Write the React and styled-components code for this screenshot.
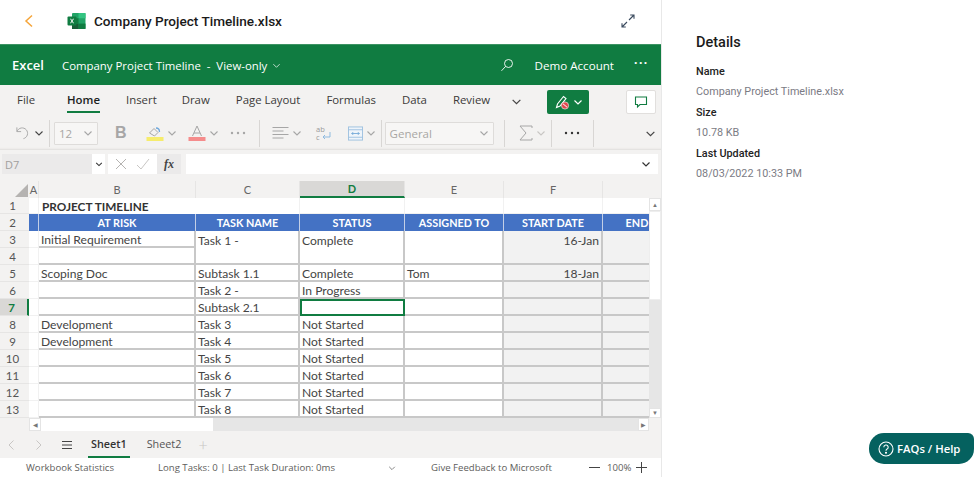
import React from 'react';
import styled, { createGlobalStyle } from 'styled-components';

const Global = createGlobalStyle`
  html, body { margin: 0; padding: 0; background: #fff; }
  * { box-sizing: border-box; }
  #root { width: 977px; height: 477px; overflow: hidden; }
`;
const Page = styled.div`display: flex; width: 977px; height: 477px; font-family: "Open Sans", sans-serif; overflow: hidden;`;
const Main = styled.div`width: 662px; height: 477px; display: flex; flex-direction: column; border-right: 1px solid #e8e8e8; flex: none;`;
const TopBar = styled.div`height: 44px; flex: none; display: flex; align-items: center; padding: 0 26px 3px 24px; color: #111;`;
const Back = styled.div`width: 43px; display: flex;`;
const FileName = styled.div`font: 500 13.600px Roboto, sans-serif; margin-left: 8px; color: #1a1a1a; flex: 1;`;
const GreenBar = styled.div`height: 41px; flex: none; background: #107c41; color: #fff; display: flex; align-items: center; font-size: 12px; padding-left: 12px; border-top: 1px solid #3d9363;`;
const Brand = styled.div`font-weight: 600; font-size: 13px; width: 50px;`;
const DocTitle = styled.div`font-size: 11.400px; flex: 1; display: flex; align-items: center; gap: 2px; white-space: pre;`;
const Account = styled.div`font-size: 11.600px; margin: 0 20px 0 21px; white-space: nowrap;`;
const GreenDots = styled.div`width: 27px; display: flex; font-size: 12px; letter-spacing: 1.500px; font-weight: 700; margin-top: -6px;`;
const Tabs = styled.div`height: 33px; flex: none; background: #f3f2f1; display: flex; align-items: center; padding-left: 17px; font-size: 11.400px; color: #3b3a39; white-space: nowrap;`;
const Tab = styled.div`
  margin-right: ${p => p.$gap}px; height: 33px; line-height: 29px; position: relative;
  ${p => p.$active && `font-weight: 600; color: #201f1e; &::after { content: ""; position: absolute; left: 0; right: 0; bottom: 5px; height: 2px; background: #107c41; }`}
`;
const EditBtn = styled.div`width: 42px; height: 24px; background: #107c41; border-radius: 2px; margin-left: 25px; display: flex; align-items: center; justify-content: center; gap: 3px;`;
const CommentBtn = styled.div`width: 30px; height: 24px; background: #fff; border: 1px solid #e1dfdd; border-radius: 2px; margin-left: 37px; display: flex; align-items: center; justify-content: center;`;
const Ribbon = styled.div`height: 32px; flex: none; background: #f3f2f1; display: flex; align-items: center; padding: 0 0 2px 15px; box-shadow: inset 0 -3px 2px -2px #dfdddb; color: #a19f9d; font-size: 12px;`;
const Sep = styled.div`width: 1px; height: 27px; flex: none; background: #d8d6d4; margin: ${p => p.$m || '0 4px'};`;
const FakeSelect = styled.div`width: ${p => p.$w}px; height: 23px; flex: none; border: 1px solid #dedcda; background: #f7f6f5; display: flex; align-items: center; justify-content: space-between; padding: 0 4px; font-size: 11.500px; color: #a8a6a4; border-radius: 1px;`;
const Tool = styled.div`display: flex; align-items: center; gap: ${p => p.$gap ?? 3}px; margin-left: ${p => p.$ml || 0}px; flex: none;`;
const Bold = styled.div`font-weight: 700; font-size: 16px; color: #a6a6a6; font-family: "Liberation Sans", sans-serif;`;
const FormulaBar = styled.div`height: 28px; flex: none; background: #f3f2f1; display: flex; align-items: center; padding: 0 3px 0 2px; gap: 3px;`;
const NameBox = styled.div`width: 103px; height: 20px; background: #ebeaea; display: flex; align-items: center; justify-content: space-between; font-size: 11px; color: #a19f9d; padding-left: 3px;`;
const NameDrop = styled.div`width: 13px; height: 20px; background: #fff; display: flex; align-items: center; justify-content: center;`;
const Confirm = styled.div`width: 49px; height: 20px; background: #fff; display: flex; align-items: center; justify-content: space-around; padding: 0 2px;`;
const Fx = styled.div`width: 24px; height: 20px; background: #ebeaea; font: italic 700 12px "Liberation Serif", serif; color: #444; display: flex; align-items: center; justify-content: center; margin-left: -3px;`;
const FormulaInput = styled.div`flex: 1; height: 20px; background: #fff; display: flex; align-items: center; justify-content: flex-end; padding-right: 7px; margin-left: 2px;`;
const SheetArea = styled.div`height: 240px; flex: none; display: flex; padding-top: 3px; background: linear-gradient(#f3f2f1 20px, #fff 20px);`;
const Grid = styled.div`
  width: 649px; height: 237px; overflow: hidden; display: grid;
  grid-template-columns: 29px 10px 157px 104px 105px 99px 99px 99px;
  grid-template-rows: 17px 16px repeat(13, 17px);
  font-family: Lato, "Open Sans", sans-serif; font-size: 12.100px; color: #444;
`;
const ColHead = styled.div`
  display: flex; align-items: center; justify-content: center; font-size: 11px; color: #666; background: #f3f2f1;
  border-right: 1px solid #e6e5e4;
  ${p => p.$on && `background: #d9d8d6; color: #107c41; font-weight: 700; border-bottom: 2px solid #107c41;`}
`;
const Corner = styled.div`background: #f3f2f1; display: flex; justify-content: flex-end; align-items: flex-end; padding: 0 1px 1px 0;`;
const RowHead = styled.div`
  display: flex; align-items: center; justify-content: center; font-size: 11.500px; color: #555; background: #f3f2f1; padding-right: 4px;
  border-bottom: 1px solid #e6e5e4;
  ${p => p.$on && `background: #d9d8d6; color: #107c41; font-weight: 700; border-right: 2px solid #107c41;`}
`;
const Cell = styled.div`
  grid-row: span ${p => p.$span || 1};
  display: flex; align-items: ${p => p.$span ? 'flex-start' : 'center'}; padding: ${p => p.$span ? '2px 2px 0' : '2px 2px 0'}; white-space: nowrap;
  min-width: 0; overflow: hidden;
  justify-content: ${p => p.$right ? 'flex-end' : 'flex-start'};
  background: ${p => p.$grey ? '#f2f2f2' : '#fff'};
  border-right: ${p => p.$plain ? '1px solid #f1f1f1' : '2px solid #c8c8c8'};
  border-bottom: ${p => p.$plain ? '1px solid #f1f1f1' : '2px solid #c8c8c8'};
  ${p => p.$active && `outline: 2px solid #107c41; outline-offset: -2px;`}
`;
const TitleCell = styled.div`grid-column: span 2; display: flex; align-items: center; padding-left: 3px; font-weight: 700; font-size: 11.800px; color: #333; white-space: nowrap; border-right: 1px solid #f1f1f1;`;
const HeadCell = styled.div`display: flex; align-items: center; justify-content: center; background: #4472c4; color: #fff; font-weight: 700; font-size: 10.800px; white-space: nowrap; border-right: 1px solid #c3cfe6; overflow: hidden;`;
const VScroll = styled.div`width: 12px; flex: none; margin-top: 17px; display: flex; flex-direction: column; height: 220px;`;
const ScrollBtn = styled.div`height: ${p => p.$h || 13}px; width: ${p => p.$w || 12}px; flex: none; background: #fff; border: 1px solid #e4e4e4; display: flex; align-items: center; justify-content: center; color: #777; font-size: 6px; line-height: 1;`;
const VThumb = styled.div`height: 89px; flex: none; background: #fff; border: 1px solid #eee;`;
const Track = styled.div`flex: 1; background: #e6e6e6;`;
const HScroll = styled.div`height: 13px; flex: none; background: #f3f2f1; display: flex; padding-left: 29px; padding-right: 12px;`;
const HThumb = styled.div`width: 172px; background: #fff; flex: none;`;
const SheetBar = styled.div`height: 27px; flex: none; background: #f3f2f1; display: flex; align-items: center; padding-left: 7px; font-size: 10.800px; color: #555;`;
const SheetTab = styled.div`
  height: 27px; line-height: 25px; padding: 0 3px; position: relative; margin-right: ${p => p.$mr}px;
  ${p => p.$active && `font-weight: 600; color: #333; &::after { content: ""; position: absolute; left: 0; right: 0; bottom: 0; height: 2px; background: #107c41; }`}
`;
const Icons = styled.div`display: flex; align-items: center; margin-right: ${p => p.$mr}px; gap: ${p => p.$gap || 0}px;`;
const Plus = styled.div`font-size: 16px; color: #c8c6c4; font-weight: 300;`;
const Status = styled.div`height: 19px; flex: none; background: #fff; display: flex; align-items: center; font-size: 9.600px; color: #605e5c; padding-left: 26px; white-space: nowrap;`;
const StatusItem = styled.div`margin-right: ${p => p.$mr}px; display: flex; align-items: center;`;
const Side = styled.div`flex: 1; padding: 33px 0 0 34px; font-family: Roboto, sans-serif; position: relative;`;
const SideTitle = styled.div`font-weight: 500; font-size: 14.500px; color: #1a1a1a; line-height: 19px; margin-bottom: 13px;`;
const Label = styled.div`font-weight: 500; font-size: 10.800px; color: #222; line-height: 14px; margin-bottom: 6px;`;
const Value = styled.div`font-size: 10.800px; color: #7b7b84; line-height: 14px; margin-bottom: 7px;`;
const Help = styled.div`position: absolute; left: 207px; top: 433px; width: 105px; height: 31px; background: #05615f; color: #fff; border-radius: 15px 6px 15px 15px; display: flex; align-items: center; gap: 3px; padding-left: 9px; font: 600 11.300px "Open Sans", sans-serif; white-space: nowrap;`;

const Chev = ({ c = '#a6a6a6', s = 10, w = 1.1 }) => (
  <svg width={s} height={s} viewBox="0 0 10 10" fill="none"><path d="M1.500 3.500 5 7l3.500-3.500" stroke={c} strokeWidth={w} /></svg>
);
const ExcelIcon = () => (
  <svg width="19" height="18" viewBox="0 0 19 18">
    <rect x="5" y="1" width="13.500" height="16" rx="1" fill="#21a366" />
    <rect x="11.500" y="1" width="7" height="5.300" fill="#33c481" />
    <rect x="5" y="6.300" width="6.500" height="5.300" fill="#107c41" />
    <rect x="11.500" y="11.600" width="7" height="5.400" fill="#107c41" />
    <rect x="5" y="11.600" width="6.500" height="5.400" fill="#185c37" />
    <rect x="0.500" y="4.500" width="9" height="9" rx="1" fill="#107c41" />
    <path d="M3 6.700 4.500 9 3 11.300h1l1-1.600 1 1.600h1L5.500 9 7 6.700H6L5 8.300 4 6.700z" fill="#fff" />
  </svg>
);

const rows = [
  [3, 'Initial Requirement', 'Task 1 -', 'Complete', '', '16-Jan'],
  [4, ''],
  [5, 'Scoping Doc', 'Subtask 1.1', 'Complete', 'Tom', '18-Jan'],
  [6, '', 'Task 2 -', 'In Progress', '', ''],
  [7, '', 'Subtask 2.1', '', '', ''],
  [8, 'Development', 'Task 3', 'Not Started', '', ''],
  [9, 'Development', 'Task 4', 'Not Started', '', ''],
  [10, '', 'Task 5', 'Not Started', '', ''],
  [11, '', 'Task 6', 'Not Started', '', ''],
  [12, '', 'Task 7', 'Not Started', '', ''],
  [13, '', 'Task 8', 'Not Started', '', ''],
];
const heads = ['AT RISK', 'TASK NAME', 'STATUS', 'ASSIGNED TO', 'START DATE', 'END DATE'];
const cols = ['', 'A', 'B', 'C', 'D', 'E', 'F', ''];

export default function App() {
  return (
    <Page>
      <Global />
      <Main>
        <TopBar>
          <Back>
            <svg width="10" height="14" viewBox="0 0 10 14" fill="none"><path d="M8 1.500 2 7l6 5.500" stroke="#f5a53a" strokeWidth="1.500" /></svg>
          </Back>
          <ExcelIcon />
          <FileName>Company Project Timeline.xlsx</FileName>
          <svg width="14" height="14" viewBox="0 0 14 14" fill="none" stroke="#3a4a5e" strokeWidth="1.100">
            <path d="M8 6 13 1M9.200 1H13v3.800M6 8l-5 5M4.800 13H1V9.200" />
          </svg>
        </TopBar>
        <GreenBar>
          <Brand>Excel</Brand>
          <DocTitle>Company Project Timeline  -  View-only <Chev c="#fff" s={9} w={.8} /></DocTitle>
          <svg width="14" height="14" viewBox="0 0 14 14" fill="none" stroke="#fff" strokeWidth=".9"><circle cx="8.500" cy="5.500" r="4" /><path d="M5.500 8.500 1.500 12.800" /></svg>
          <Account>Demo Account</Account>
          <GreenDots>···</GreenDots>
        </GreenBar>
        <Tabs>
          <Tab $gap={32}>File</Tab>
          <Tab $gap={26} $active>Home</Tab>
          <Tab $gap={25}>Insert</Tab>
          <Tab $gap={26}>Draw</Tab>
          <Tab $gap={26}>Page Layout</Tab>
          <Tab $gap={26}>Formulas</Tab>
          <Tab $gap={26}>Data</Tab>
          <Tab $gap={21}>Review</Tab>
          <Chev c="#444" s={11} />
          <EditBtn>
            <svg width="16" height="16" viewBox="0 0 16 16" fill="none">
              <path d="M2.500 13.500 3.500 10 9.500 2.500 12 4.500 6 12z" stroke="#fff" strokeWidth="1.100" />
              <circle cx="11" cy="11.500" r="3.600" fill="#e2474f" stroke="#fff" strokeWidth=".6" />
              <path d="M9 9.800l4 3.400" stroke="#fff" strokeWidth="1" />
            </svg>
            <Chev c="#fff" s={10} w={1.200} />
          </EditBtn>
          <CommentBtn>
            <svg width="14" height="14" viewBox="0 0 14 14" fill="none" stroke="#107c41" strokeWidth="1.100"><path d="M1.500 2h11v7.500H6L3.500 12V9.500h-2z" /></svg>
          </CommentBtn>
        </Tabs>
        <Ribbon>
          <Tool $gap={4}>
            <svg width="15" height="16" viewBox="0 0 16 16" fill="none" stroke="#a6a6a6" strokeWidth="1"><path d="M2 2v4.500h4.500M2.200 6.300A5.800 5.800 0 1 1 9 14" /></svg>
            <Chev c="#444" s={10} />
          </Tool>
          <Sep $m="0 4px 0 5px" />
          <FakeSelect $w={44}>12<Chev /></FakeSelect>
          <Tool $ml={17}><Bold>B</Bold></Tool>
          <Tool $ml={19}>
            <svg width="18" height="18" viewBox="0 0 18 18" fill="none">
              <path d="M3.500 9 8 4.500l4 4L8.500 12z" stroke="#a6a6a6" />
              <path d="M10 4c2 0 3.500 1.500 3.500 4" stroke="#6fa8dc" strokeWidth="1.300" />
              <rect x="0.500" y="13" width="17" height="4" fill="#f6ec6c" />
            </svg>
            <Chev />
          </Tool>
          <Tool $ml={11}>
            <svg width="18" height="18" viewBox="0 0 18 18" fill="none">
              <path d="M4.500 12 9 2l4.500 10M6 9h6" stroke="#a6a6a6" />
              <rect x="0.500" y="13" width="17" height="4" fill="#f58c8c" />
            </svg>
            <Chev />
          </Tool>
          <Tool $ml={11}>
            <svg width="16" height="4" viewBox="0 0 16 4" fill="#a6a6a6"><circle cx="2" cy="2" r="1.200" /><circle cx="8" cy="2" r="1.200" /><circle cx="14" cy="2" r="1.200" /></svg>
          </Tool>
          <Sep $m="0 12px 0 13px" />
          <Tool>
            <svg width="17" height="16" viewBox="0 0 16 16" stroke="#a6a6a6" strokeWidth="1"><path d="M0 2.500h16M0 6h11M0 9.500h16M0 13h11" /></svg>
            <Chev />
          </Tool>
          <Tool $ml={13}>
            <svg width="17" height="18" viewBox="0 0 17 18" fill="none">
              <text x="1" y="8" fontSize="7.500" fill="#999" fontFamily="Open Sans">ab</text>
              <text x="1" y="16" fontSize="7.500" fill="#999" fontFamily="Open Sans">c</text>
              <path d="M15 8v5H8m2-2-2 2 2 2" stroke="#8fbbe0" />
            </svg>
          </Tool>
          <Tool $ml={16}>
            <svg width="15" height="15" viewBox="0 0 16 15" fill="none">
              <rect x=".5" y=".5" width="15" height="14" fill="#eef4fa" stroke="#9ec1e0" />
              <path d="M.5 3.500h15M.5 11.500h15" stroke="#9ec1e0" />
              <path d="M4 7.500h8M5.500 6 4 7.500 5.500 9M10.500 6 12 7.500 10.500 9" stroke="#5c9bd1" strokeWidth=".8" />
            </svg>
            <Chev />
          </Tool>
          <Sep $m="0 3px 0 5px" />
          <FakeSelect $w={109}>General<Chev /></FakeSelect>
          <Sep $m="0 14px 0 10px" />
          <Tool>
            <svg width="14" height="16" viewBox="0 0 14 16" fill="none" stroke="#a6a6a6"><path d="M13 3V1H1l6 7-6 7h12v-2" /></svg>
            <Chev c="#c8c6c4" />
          </Tool>
          <Sep $m="0 0 0 5px" />
          <Tool $ml={12}>
            <svg width="16" height="4" viewBox="0 0 16 4" fill="#333"><circle cx="2" cy="2" r="1.200" /><circle cx="8" cy="2" r="1.200" /><circle cx="14" cy="2" r="1.200" /></svg>
          </Tool>
          <Sep $m="0 51px 0 13px" />
          <Tool><Chev c="#444" s={11} /></Tool>
        </Ribbon>
        <FormulaBar>
          <NameBox>D7<NameDrop><Chev c="#333" s={8} w={1.300} /></NameDrop></NameBox>
          <Confirm>
            <svg width="12" height="12" viewBox="0 0 12 12" stroke="#b5b3b1" strokeWidth="1"><path d="M1 1l10 10M11 1 1 11" /></svg>
            <svg width="14" height="12" viewBox="0 0 14 12" fill="none" stroke="#c8c6c4" strokeWidth="1"><path d="M1 7l4 4 8-10" /></svg>
          </Confirm>
          <Fx>fx</Fx>
          <FormulaInput><Chev c="#333" s={10} w={1.200} /></FormulaInput>
        </FormulaBar>
        <SheetArea>
          <Grid>
            {cols.map((c, i) => i === 0
              ? <Corner key="corner"><svg width="13" height="13" viewBox="0 0 13 13"><path d="M13 0v13H0z" fill="#b5b3b1" /></svg></Corner>
              : <ColHead key={i} $on={c === 'D'}>{c}</ColHead>)}
            <RowHead>1</RowHead>
            <Cell $plain />
            <TitleCell>PROJECT TIMELINE</TitleCell>
            {[0, 1, 2, 3].map(i => <Cell key={i} $plain />)}
            <RowHead>2</RowHead>
            <HeadCell />
            {heads.map(h => <HeadCell key={h}>{h}</HeadCell>)}
            {rows.map(r => (
              <React.Fragment key={r[0]}>
                <RowHead $on={r[0] === 7}>{r[0]}</RowHead>
                <Cell $plain />
                <Cell>{r[1]}</Cell>
                {r.length > 2 && (() => {
                  const span = r[0] === 3 ? 2 : undefined;
                  return (
                    <>
                      <Cell $span={span}>{r[2]}</Cell>
                      <Cell $span={span} $active={r[0] === 7}>{r[3]}</Cell>
                      <Cell $span={span}>{r[4]}</Cell>
                      <Cell $span={span} $grey $right>{r[5]}</Cell>
                      <Cell $span={span} $grey />
                    </>
                  );
                })()}
              </React.Fragment>
            ))}
          </Grid>
          <VScroll>
            <ScrollBtn>▲</ScrollBtn>
            <VThumb />
            <Track />
            <ScrollBtn $h={10}>▼</ScrollBtn>
          </VScroll>
        </SheetArea>
        <HScroll>
          <ScrollBtn $w={12}>◀</ScrollBtn>
          <HThumb />
          <Track />
          <ScrollBtn $w={11}>▶</ScrollBtn>
        </HScroll>
        <SheetBar>
          <Icons $mr={18} $gap={20}>
            <svg width="8" height="12" viewBox="0 0 8 12" fill="none" stroke="#c8c6c4"><path d="M6.500 1.500 2 6l4.500 4.500" /></svg>
            <svg width="8" height="12" viewBox="0 0 8 12" fill="none" stroke="#c8c6c4"><path d="M1.500 1.500 6 6l-4.500 4.500" /></svg>
          </Icons>
          <Icons $mr={15}>
            <svg width="12" height="10" viewBox="0 0 12 10" stroke="#444"><path d="M1 1.500h10M1 5h10M1 8.500h10" /></svg>
          </Icons>
          <SheetTab $active $mr={14}>Sheet1</SheetTab>
          <SheetTab $mr={14}>Sheet2</SheetTab>
          <Plus>+</Plus>
        </SheetBar>
        <Status>
          <StatusItem $mr={44}>Workbook Statistics</StatusItem>
          <StatusItem $mr={53}>Long Tasks: 0 | Last Task Duration: 0ms</StatusItem>
          <StatusItem $mr={35}><Chev c="#777" s={8} w={1.100} /></StatusItem>
          <StatusItem $mr={37}>Give Feedback to Microsoft</StatusItem>
          <StatusItem $mr={7}>
            <svg width="11" height="11" viewBox="0 0 11 11" stroke="#444"><path d="M0 5.500h11" /></svg>
          </StatusItem>
          <StatusItem $mr={5}>100%</StatusItem>
          <StatusItem $mr={0}>
            <svg width="11" height="11" viewBox="0 0 11 11" stroke="#444"><path d="M0 5.500h11M5.500 0v11" /></svg>
          </StatusItem>
        </Status>
      </Main>
      <Side>
        <SideTitle>Details</SideTitle>
        <Label>Name</Label>
        <Value>Company Project Timeline.xlsx</Value>
        <Label>Size</Label>
        <Value>10.78 KB</Value>
        <Label>Last Updated</Label>
        <Value>08/03/2022 10:33 PM</Value>
        <Help>
          <svg width="16" height="16" viewBox="0 0 16 16" fill="none" stroke="#fff" strokeWidth="1.100">
            <circle cx="8" cy="8" r="7" />
            <path d="M5.800 6.200a2.200 2.200 0 1 1 3.300 1.900c-.7.400-1.100.8-1.100 1.600" />
            <circle cx="8" cy="11.800" r=".5" fill="#fff" />
          </svg>
          FAQs / Help
        </Help>
      </Side>
    </Page>
  );
}
